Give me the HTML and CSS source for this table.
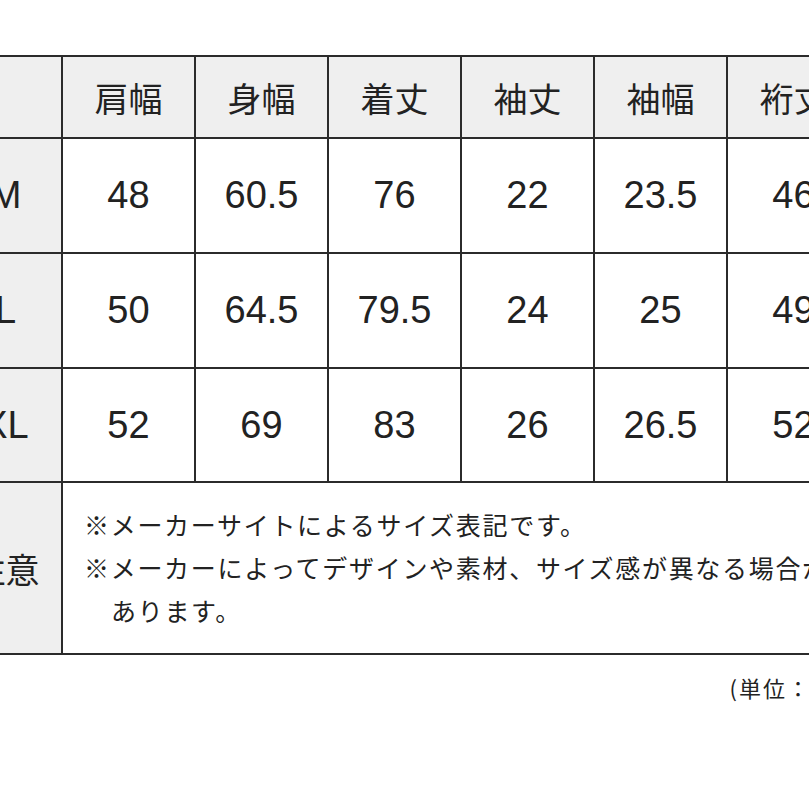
FILE: index.html
```html
<!DOCTYPE html>
<html lang="ja">
<head>
<meta charset="utf-8">
<title>サイズ表</title>
<link rel="stylesheet" href="styles.css">
</head>
<body>
<div class="page">
  <div class="size-table">
    <div class="cell head label"></div>
    <div class="cell head">肩幅</div>
    <div class="cell head">身幅</div>
    <div class="cell head">着丈</div>
    <div class="cell head">袖丈</div>
    <div class="cell head">袖幅</div>
    <div class="cell head">裄丈</div>

    <div class="cell label num">M</div>
    <div class="cell num">48</div>
    <div class="cell num">60.5</div>
    <div class="cell num">76</div>
    <div class="cell num">22</div>
    <div class="cell num">23.5</div>
    <div class="cell num">46</div>

    <div class="cell label num">L</div>
    <div class="cell num">50</div>
    <div class="cell num">64.5</div>
    <div class="cell num">79.5</div>
    <div class="cell num">24</div>
    <div class="cell num">25</div>
    <div class="cell num">49</div>

    <div class="cell label num">XL</div>
    <div class="cell num">52</div>
    <div class="cell num">69</div>
    <div class="cell num">83</div>
    <div class="cell num">26</div>
    <div class="cell num">26.5</div>
    <div class="cell num">52</div>

    <div class="cell label jp">注意</div>
    <div class="cell notes">
      <p class="note">※メーカーサイトによるサイズ表記です。</p>
      <p class="note">※メーカーによってデザインや素材、サイズ感が異なる場合が<br>あります。</p>
    </div>
  </div>
  <div class="unit">(単位：cm)</div>
</div>
</body>
</html>
```

FILE: styles.css
```css
html, body {
  margin: 0;
  padding: 0;
  background: #ffffff;
  overflow: hidden;
  width: 809px;
  height: 809px;
}

.page {
  margin-left: -52px;
  padding-top: 55px;
  width: 913px;
}

.size-table {
  display: grid;
  grid-template-columns: 111px repeat(6, 131px);
  grid-template-rows: 80px 113px 113px 112px 170px;
  gap: 2px;
  padding: 2px;
  background: #2b2b2b;
  color: #222222;
}

.cell {
  background: #ffffff;
  display: flex;
  align-items: center;
  justify-content: center;
  white-space: nowrap;
  overflow: hidden;
}

.head {
  background: #efefef;
  font-family: "Noto Sans CJK JP", sans-serif;
  font-size: 34px;
}

.label {
  background: #efefef;
}

.num {
  font-family: "Liberation Sans", Arial, sans-serif;
  font-size: 38px;
}

.jp {
  font-family: "Noto Sans CJK JP", sans-serif;
  font-size: 34px;
}

.notes {
  grid-column: span 6;
  flex-direction: column;
  align-items: flex-start;
  justify-content: center;
  padding-left: 21px;
  padding-bottom: 2px;
  font-family: "Noto Sans CJK JP", sans-serif;
  font-size: 25px;
  letter-spacing: 1.7px;
  line-height: 43px;
}

.note {
  margin: 0;
  padding-left: 27px;
  text-indent: -27px;
}

.unit {
  text-align: right;
  padding-right: 5px;
  margin-top: 16px;
  font-family: "Noto Sans CJK JP", sans-serif;
  font-size: 22px;
  letter-spacing: 2px;
  color: #222222;
}
```
